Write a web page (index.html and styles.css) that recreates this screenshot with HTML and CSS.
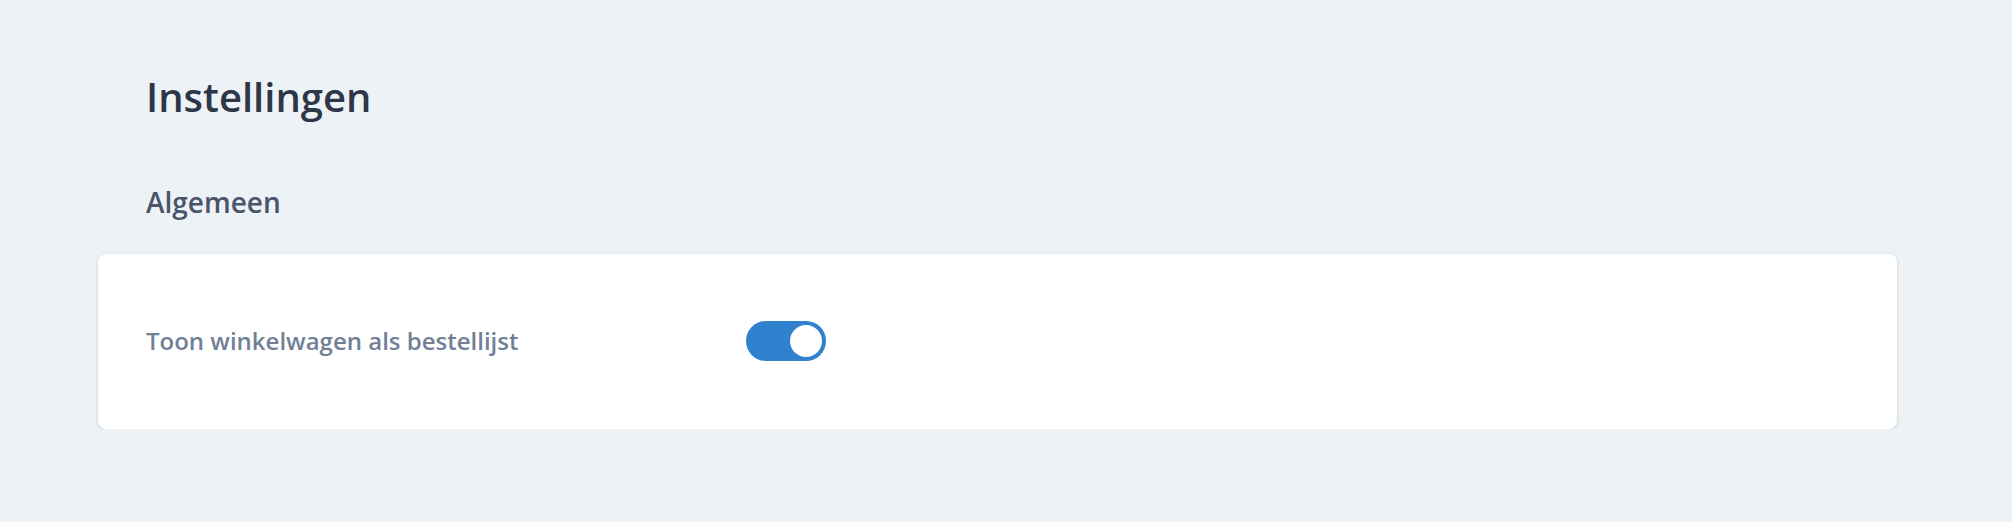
FILE: index.html
```html
<!DOCTYPE html>
<html lang="nl">
<head>
  <meta charset="UTF-8" />
  <title>Instellingen</title>
  <link rel="stylesheet" href="styles.css">
</head>
<body>
  <main class="page">
    <h1 class="page-title">Instellingen</h1>
    <h2 class="section-title">Algemeen</h2>

    <div class="settings-card">
      <label class="setting-label" for="cart-as-list">Toon winkelwagen als bestellijst</label>
      <button type="button" id="cart-as-list" class="toggle is-on" role="switch" aria-checked="true" onclick="flip(this)">
        <span class="toggle-knob"></span>
      </button>
    </div>
  </main>

  <script>
    function flip(btn) {
      btn.classList.toggle("is-on");
      btn.setAttribute("aria-checked", btn.classList.contains("is-on"));
    }
  </script>
</body>
</html>
```

FILE: styles.css
```css
body {
  font-family: 'Open Sans', 'Noto Sans', sans-serif;
  background-color: #edf2f7;
  margin: 0;
  padding: 0;
}
.page {
  padding: 73px 115px 0 98px;
}
.page-title {
  font-size: 40px;
  line-height: 1.2;
  font-weight: 600;
  color: #2d3748;
  margin: 0 0 0 48px;
}
.section-title {
  font-size: 28px;
  line-height: 1.2;
  font-weight: 600;
  color: #4a5568;
  margin: 65px 0 34px 48px;
}
.settings-card {
  display: flex;
  align-items: center;
  height: 175px;
  padding: 0 48px;
  background-color: #ffffff;
  border-radius: 8px;
  box-shadow: 0 1px 4px rgba(0, 0, 0, 0.12), 0 1px 2px rgba(0, 0, 0, 0.06);
}
.setting-label {
  width: 600px;
  font-size: 24px;
  line-height: 1.2;
  font-weight: 600;
  color: #718096;
}
.toggle {
  display: flex;
  align-items: center;
  width: 80px;
  height: 40px;
  padding: 4px;
  border: none;
  border-radius: 20px;
  background-color: #cbd5e0;
  cursor: pointer;
}
.toggle.is-on {
  background-color: #3182ce;
  justify-content: flex-end;
}
.toggle-knob {
  width: 32px;
  height: 32px;
  border-radius: 50%;
  background-color: #ffffff;
}
```
